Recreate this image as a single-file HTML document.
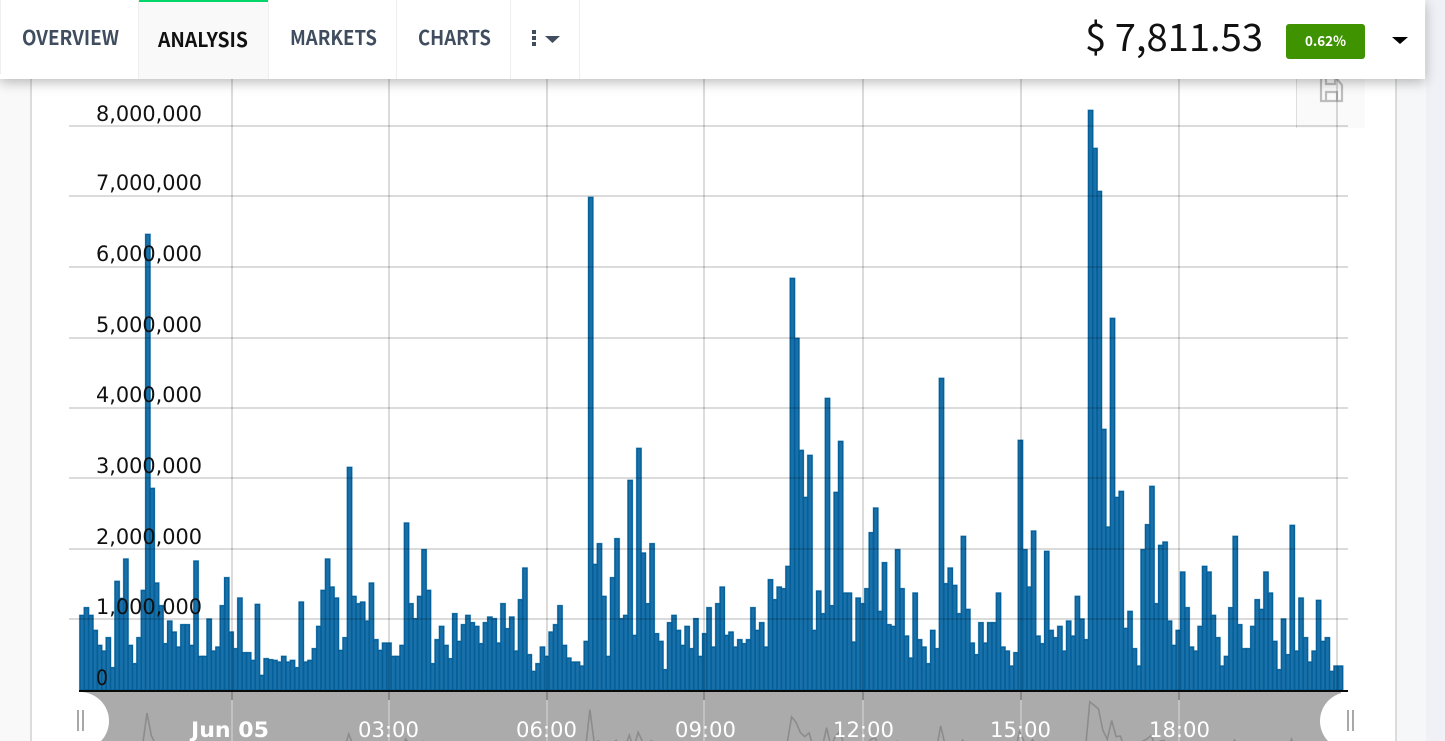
<!DOCTYPE html>
<html>
<head>
<meta charset="utf-8">
<title>Analysis</title>
<style>
html,body{margin:0;padding:0;width:1445px;height:741px;overflow:hidden;background:#eff1f7;}
#wrap{position:relative;width:1445px;height:741px;overflow:hidden;}
#left{position:absolute;left:0;top:0;width:31px;height:741px;background:#f9f9f9;}
#panel{position:absolute;left:31px;top:0;width:1363px;height:741px;background:#fff;border-left:2px solid #dcdcdc;border-right:2px solid #dcdcdc;box-sizing:content-box;margin-left:-1px;}
#rt{position:absolute;left:1396px;top:0;width:30px;height:741px;background:#f6f7f9;}
#chart{position:absolute;left:0;top:0;}
#nav{position:absolute;left:0;top:0;width:1425px;height:79px;background:#fff;box-shadow:0 3px 12px rgba(0,0,0,.28);}
#nav svg{position:absolute;left:0;top:0;}
</style>
</head>
<body>
<div id="wrap">
<div id="left"></div>
<div id="rt"></div>
<div id="panel"></div>
<svg id="chart" width="1445" height="741" viewBox="0 0 1445 741" xmlns="http://www.w3.org/2000/svg">
  <!-- save button -->
  <rect x="1296" y="79" width="69" height="49" fill="#fafafa"/>
  <rect x="1296" y="79" width="1" height="49" fill="#dedede"/>
  <g fill="none" stroke="#bdbdbd" stroke-width="2.200">
    <path d="M1321 78V101H1342V85L1336 78Z"/>
    <path d="M1326 101V92H1337V101"/>
    <path d="M1326 78V84H1335V78"/>
  </g>
  <g id="halo"></g>
  <g id="bars"></g>
  <!-- grid -->
  <g fill="rgba(0,0,0,.14)">
    <rect x="69" y="125" width="1279" height="2"/>
    <rect x="69" y="195" width="1279" height="2"/>
    <rect x="69" y="266" width="1279" height="2"/>
    <rect x="69" y="337" width="1279" height="2"/>
    <rect x="69" y="407" width="1279" height="2"/>
    <rect x="69" y="477" width="1279" height="2"/>
    <rect x="69" y="548" width="1279" height="2"/>
    <rect x="69" y="618" width="1279" height="2"/>
    <rect x="231" y="79" width="2" height="611"/>
    <rect x="388" y="79" width="2" height="611"/>
    <rect x="546" y="79" width="2" height="611"/>
    <rect x="703" y="79" width="2" height="611"/>
    <rect x="862" y="79" width="2" height="611"/>
    <rect x="1020" y="79" width="2" height="611"/>
    <rect x="1178" y="79" width="2" height="611"/>
    <rect x="1336" y="79" width="2" height="611"/>
  </g>
  <rect x="79" y="690" width="1269" height="2" fill="#0a0a0a"/>
  <!-- navigator -->
  <rect x="79" y="692" width="1262" height="49" fill="#ababab"/>
  <g fill="#c2c2c2">
    <rect x="231" y="692" width="2" height="49"/><rect x="388" y="692" width="2" height="49"/>
    <rect x="546" y="692" width="2" height="49"/><rect x="703" y="692" width="2" height="49"/>
    <rect x="862" y="692" width="2" height="49"/><rect x="1020" y="692" width="2" height="49"/>
    <rect x="1178" y="692" width="2" height="49"/>
  </g>
  <g fill="#8a8a8a">
    <rect x="231" y="692" width="2" height="8"/><rect x="388" y="692" width="2" height="8"/>
    <rect x="546" y="692" width="2" height="8"/><rect x="703" y="692" width="2" height="8"/>
    <rect x="862" y="692" width="2" height="8"/><rect x="1020" y="692" width="2" height="8"/>
    <rect x="1178" y="692" width="2" height="8"/>
  </g>
  <polyline id="navline" fill="none" stroke="#8c8c8c" stroke-width="1.600" points=""/>
  <g font-family="'DejaVu Sans',sans-serif" font-size="21.500" fill="#fff">
    <text x="191" y="737" font-weight="bold" textLength="78" lengthAdjust="spacingAndGlyphs">Jun 05</text>
    <text x="358" y="737" textLength="61" lengthAdjust="spacingAndGlyphs">03:00</text>
    <text x="516" y="737" textLength="61" lengthAdjust="spacingAndGlyphs">06:00</text>
    <text x="675" y="737" textLength="61" lengthAdjust="spacingAndGlyphs">09:00</text>
    <text x="833" y="737" textLength="61" lengthAdjust="spacingAndGlyphs">12:00</text>
    <text x="990" y="737" textLength="61" lengthAdjust="spacingAndGlyphs">15:00</text>
    <text x="1149" y="737" textLength="61" lengthAdjust="spacingAndGlyphs">18:00</text>
  </g>
  <!-- handles -->
  <circle cx="80" cy="721" r="29" fill="#fff"/>
  <g fill="#a8a8a8"><rect x="77" y="710" width="2" height="21"/><rect x="82" y="710" width="2" height="21"/></g>
  <circle cx="1349" cy="721" r="29" fill="#fff"/>
  <rect x="1367" y="690" width="27" height="51" fill="#fff"/>
  <g fill="#a8a8a8"><rect x="1347" y="710" width="2" height="21"/><rect x="1352" y="710" width="2" height="21"/></g>
  <!-- y labels -->
  <g font-family="'DejaVu Sans',sans-serif" font-size="21.500" fill="#111">
    <text x="96" y="121" textLength="106" lengthAdjust="spacingAndGlyphs">8,000,000</text>
    <text x="96" y="190" textLength="106" lengthAdjust="spacingAndGlyphs">7,000,000</text>
    <text x="96" y="261" textLength="106" lengthAdjust="spacingAndGlyphs">6,000,000</text>
    <text x="96" y="332" textLength="106" lengthAdjust="spacingAndGlyphs">5,000,000</text>
    <text x="96" y="402" textLength="106" lengthAdjust="spacingAndGlyphs">4,000,000</text>
    <text x="96" y="473" textLength="106" lengthAdjust="spacingAndGlyphs">3,000,000</text>
    <text x="96" y="544" textLength="106" lengthAdjust="spacingAndGlyphs">2,000,000</text>
    <text x="96" y="614" textLength="106" lengthAdjust="spacingAndGlyphs">1,000,000</text>
    <text x="96" y="685" textLength="12" lengthAdjust="spacingAndGlyphs">0</text>
  </g>
</svg>
<div id="nav">
<svg width="1425" height="79" viewBox="0 0 1425 79" xmlns="http://www.w3.org/2000/svg">
  <rect x="139" y="0" width="129" height="79" fill="#f9f9f9"/>
  <rect x="139" y="0" width="129" height="2" fill="#00d768"/>
  <g fill="#eeeeee">
    <rect x="0" y="0" width="1" height="74"/>
    <rect x="138" y="0" width="1" height="79"/>
    <rect x="268" y="0" width="1" height="79"/>
    <rect x="396" y="0" width="1" height="79"/>
    <rect x="510" y="0" width="1" height="79"/>
    <rect x="579" y="0" width="1" height="79"/>
  </g>
  <g font-family="'Noto Sans CJK JP','Liberation Sans',sans-serif" font-weight="700" font-size="20" fill="#3f4d5f">
    <text x="22" y="45" textLength="97" lengthAdjust="spacingAndGlyphs">OVERVIEW</text>
    <text x="158" y="47" fill="#111" textLength="90" lengthAdjust="spacingAndGlyphs">ANALYSIS</text>
    <text x="290" y="45" textLength="87" lengthAdjust="spacingAndGlyphs">MARKETS</text>
    <text x="418" y="45" textLength="73" lengthAdjust="spacingAndGlyphs">CHARTS</text>
  </g>
  <g fill="#3f4d5f">
    <rect x="532" y="30" width="4" height="4"/>
    <rect x="532" y="36" width="4" height="4"/>
    <rect x="532" y="42" width="4" height="4"/>
    <path d="M545 36H560L552.500 43Z"/>
  </g>
  <text x="1085" y="51" font-family="'Noto Sans CJK JP','Liberation Sans',sans-serif" font-size="38" fill="#111" textLength="178" lengthAdjust="spacingAndGlyphs">$ 7,811.53</text>
  <rect x="1286" y="24" width="79" height="35" rx="3" fill="#3f9200"/>
  <text x="1305" y="46" font-family="'Noto Sans CJK JP','Liberation Sans',sans-serif" font-weight="700" font-size="14" fill="#fff" textLength="41" lengthAdjust="spacingAndGlyphs">0.62%</text>
  <path d="M1392 37H1408L1400 44Z" fill="#000"/>
</svg>
</div>
</div>
<script>
var d=[345,322,345,390,435,452,412,502,243,294,
176,435,490,412,270,-234,-488,248,316,430,
362,395,440,373,373,435,182,468,468,356,
452,440,316,232,395,445,293,457,457,480,
312,525,475,478,480,485,468,485,480,502,
305,485,480,445,378,270,176,260,293,450,
412,-467,288,310,305,362,248,418,450,428,
428,468,468,435,68,310,355,288,148,270,
490,418,378,435,475,340,423,373,345,367,
378,430,367,350,355,428,310,385,350,452,
298,203,463,513,490,440,468,395,373,316,
435,473,485,485,497,423,-197,192,130,288,
468,232,115,355,345,-480,405,-448,158,310,
130,400,423,508,367,345,390,435,378,445,
355,468,400,322,440,310,260,405,395,440,
418,430,418,322,390,367,440,238,298,260,
265,198,-278,-338,-450,-497,-455,390,272,340,
-398,316,-492,-441,278,278,425,293,310,265,
97,23,333,187,373,378,148,265,407,473,
278,418,440,490,390,445,-378,250,203,255,
340,108,327,428,463,367,428,367,367,278,
440,452,497,457,-440,148,260,92,407,430,
153,390,412,378,452,362,407,288,356,418,
-110,-148,-191,-429,80,-318,-497,-491,384,333,
445,497,148,73,-486,310,135,125,362,435,
390,215,322,440,452,378,198,215,345,412,
497,468,322,108,373,445,445,378,298,327,
215,278,423,508,356,463,75,452,293,412,
485,452,300,423,412,513,497,497];
var s='',h='',p=[],w=4.385;
for(var i=0;i<d.length;i++){
  var t=d[i]<0?-d[i]:500+d[i]/3, x=79+i*w;
  var a='x="'+(x+1).toFixed(2)+'" y="'+(t+.5).toFixed(1)+'" width="'+(w-.3).toFixed(2)+'" height="'+(689.5-t).toFixed(1)+'"';
  h+='<rect '+a+' fill="none" stroke="#a8cbe0" stroke-width="2.2"/>';
  s+='<rect '+a+' fill="#1a70a8" stroke="#05609a" stroke-width="1.4"/>';
  p.push((x+2.2).toFixed(1)+','+(754-.09*(690-t)).toFixed(1));
}
document.getElementById('halo').innerHTML=h;
document.getElementById('bars').innerHTML=s;
document.getElementById('navline').setAttribute('points',p.join(' '));
</script>
</body>
</html>
